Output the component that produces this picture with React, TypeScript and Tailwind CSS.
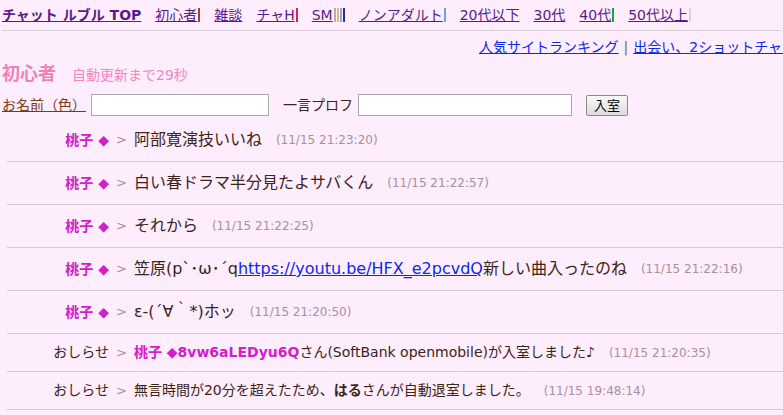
const font = '"DejaVu Sans", "Noto Sans CJK JP", sans-serif'

type NavItem = { label: string; bars?: string[]; bold?: boolean }

const navItems: NavItem[] = [
  { label: 'チャット ルブル TOP', bold: true },
  { label: '初心者', bars: ['#a0403c'] },
  { label: '雑談' },
  { label: 'チャH', bars: ['#e8203c'] },
  { label: 'SM', bars: ['#b0b0b0', '#e0c060', '#a0a0e0', '#2030a0'] },
  { label: 'ノンアダルト', bars: ['#70a0e0'] },
  { label: '20代以下' },
  { label: '30代' },
  { label: '40代', bars: ['#20a040'] },
  { label: '50代以上', bars: ['#e0d0f0'] },
]

type Msg = { name: string; text: React.ReactNode; time: string }

const messages: Msg[] = [
  { name: '桃子', text: '阿部寛演技いいね', time: '(11/15 21:23:20)' },
  { name: '桃子', text: '白い春ドラマ半分見たよサバくん', time: '(11/15 21:22:57)' },
  { name: '桃子', text: 'それから', time: '(11/15 21:22:25)' },
  {
    name: '桃子',
    text: (
      <>
        笠原(p`･ω･´q
        <a href="#" className="text-[#0a2ae8] underline">
          https://youtu.be/HFX_e2pcvdQ
        </a>
        新しい曲入ったのね
      </>
    ),
    time: '(11/15 21:22:16)',
  },
  { name: '桃子', text: 'ε-(´∀｀*)ホッ', time: '(11/15 21:20:50)' },
]

function Row({ children, small }: { children: React.ReactNode; small?: boolean }) {
  return (
    <div
      className={`ml-[7px] flex items-center border-b border-[#d8c8d8] whitespace-nowrap ${
        small ? 'h-[38px]' : 'h-[43px]'
      }`}
    >
      {children}
    </div>
  )
}

function Sep() {
  return <span className="mx-[7px] text-[13px] text-[#a89098]">&gt;</span>
}

function Time({ t }: { t: string }) {
  return <span className="ml-[14px] text-[12px] text-[#a8909c]">{t}</span>
}

export default function App() {
  return (
    <div className="h-[415px] w-[783px] overflow-hidden bg-[#fdedfd] text-[#3c2418]" style={{ fontFamily: font }}>
      <div className="mx-[2px] flex h-[31px] items-center gap-[14px] border-b border-[#d8ccd8] whitespace-nowrap text-[14px] text-[#5a1a8a]">
        {navItems.map((item) => (
          <span key={item.label} className="flex items-center">
            <a href="#" className={`underline ${item.bold ? 'font-bold' : ''}`}>
              {item.label}
            </a>
            {item.bars?.map((c, i) => (
              <span key={i} className="ml-[1px] inline-block h-[14px] w-[2px]" style={{ backgroundColor: c }} />
            ))}
          </span>
        ))}
      </div>

      <div className="mt-[6px] h-[20px] overflow-hidden pl-[479px] whitespace-nowrap text-[14px] leading-[20px] text-[#0a2ae8]">
        <a href="#" className="underline">人気サイトランキング</a>
        <span className="mx-[5px] text-[#7a6070]">|</span>
        <a href="#" className="underline">出会い、2ショットチャット</a>
      </div>

      <div className="ml-[2px] mt-[3px] flex items-baseline gap-[16px]">
        <span className="text-[18px] font-bold text-[#f080b8]">初心者</span>
        <span className="text-[14px] text-[#f088c0]">自動更新まで29秒</span>
      </div>

      <div className="ml-[2px] mt-[7px] flex h-[22px] items-center whitespace-nowrap text-[14px]">
        <span className="w-[83px] shrink-0 text-[#7a3a14] underline">お名前（色）</span>
        <input className="ml-[6px] h-[22px] w-[178px] shrink-0 border border-[#a8a8a8] bg-white" />
        <span className="ml-[14px] w-[69px] shrink-0 text-[#3c2418]">一言プロフ</span>
        <input className="ml-[6px] h-[22px] w-[214px] shrink-0 border border-[#a8a8a8] bg-white" />
        <button className="ml-[14px] h-[21px] w-[42px] shrink-0 rounded-[2px] border border-[#8a8a8a] bg-gradient-to-b from-[#f8f8f8] to-[#dcdcdc] text-[13px] text-black">
          入室
        </button>
      </div>

      <div className="mt-[3px]">
        {messages.map((m, i) => (
          <Row key={i}>
            <span className="w-[102px] text-right text-[14px] font-bold text-[#d020c8]">
              {m.name} <span className="text-[14px]">◆</span>
            </span>
            <Sep />
            <span className="text-[16px]">{m.text}</span>
            <Time t={m.time} />
          </Row>
        ))}
        <Row small>
          <span className="w-[102px] text-right text-[14px]">おしらせ</span>
          <Sep />
          <span className="text-[14px]">
            <span className="font-bold text-[#d020c8]">桃子 ◆8vw6aLEDyu6Q</span>
            さん(SoftBank openmobile)が入室しました♪
          </span>
          <Time t="(11/15 21:20:35)" />
        </Row>
        <Row small>
          <span className="w-[102px] text-right text-[14px]">おしらせ</span>
          <Sep />
          <span className="text-[14px]">
            無言時間が20分を超えたため、<span className="font-bold">はる</span>さんが自動退室しました。
          </span>
          <Time t="(11/15 19:48:14)" />
        </Row>
      </div>
    </div>
  )
}
